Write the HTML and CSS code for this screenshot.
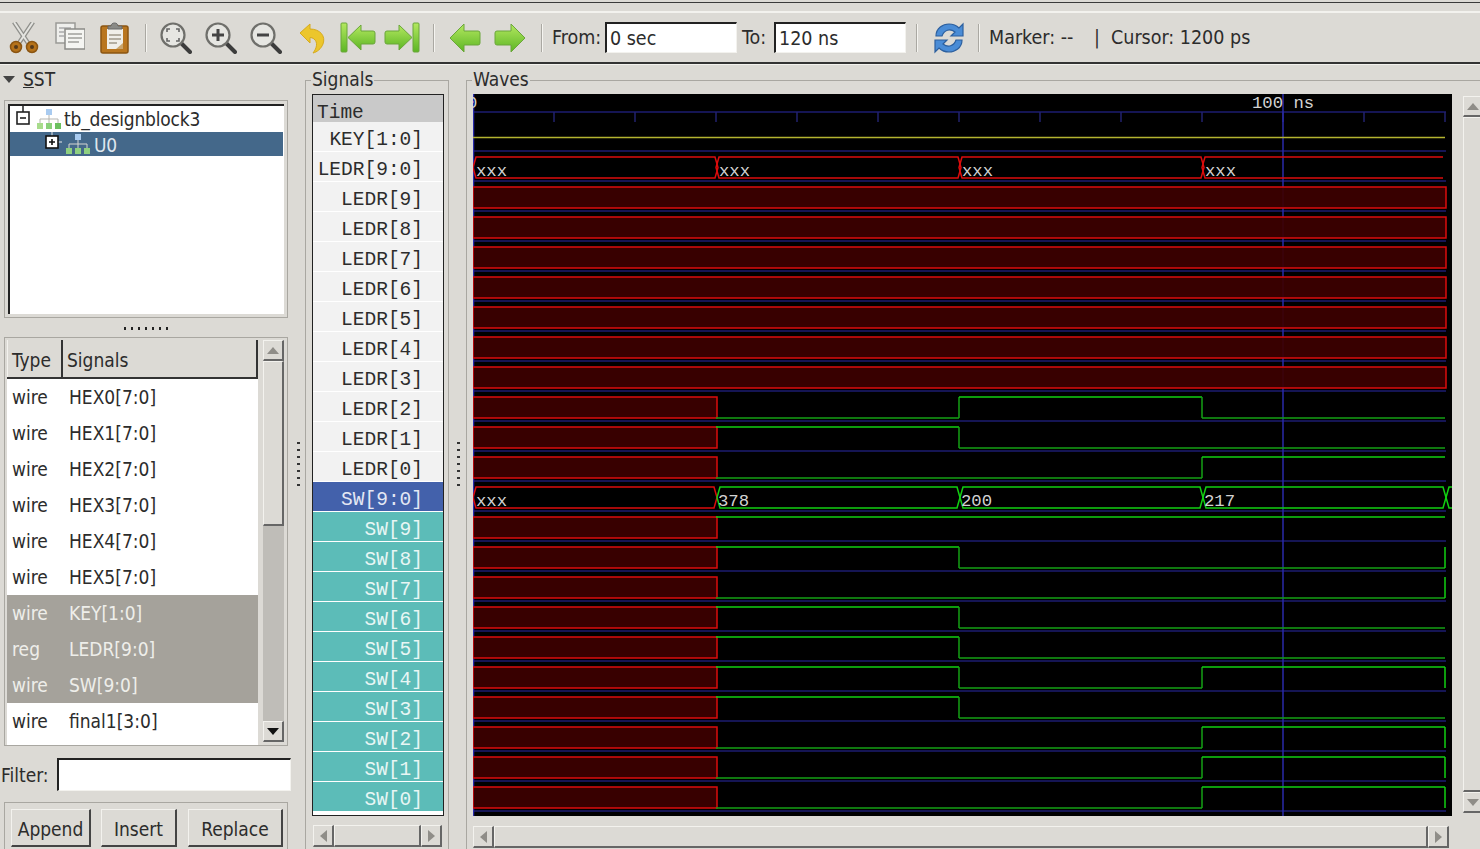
FILE: index.html
```html
<!DOCTYPE html>
<html lang="en">
<head>
    <meta charset="UTF-8">
    <title>GTKWave</title>
    <link rel="stylesheet" href="styles.css">
</head>
<body>

<div class="menu-gap"></div>

<div class="toolbar">
    <div class="tools first-tools">
        <svg class="icon" viewBox="0 0 32 32">
            <path d="M6 0 L20 21" stroke="#8f8f8b" stroke-width="4.5"/>
            <path d="M25 0 L11 21" stroke="#8f8f8b" stroke-width="4.5"/>
            <path d="M6 0 L20 21 M25 0 L11 21" stroke="#e4e4e0" stroke-width="2"/>
            <circle cx="8" cy="25" r="5.5" fill="#b5721a" stroke="#8b5512" stroke-width="1.5"/>
            <circle cx="24" cy="25" r="5.5" fill="#b5721a" stroke="#8b5512" stroke-width="1.5"/>
            <circle cx="8" cy="25" r="2" fill="#54391a"/>
            <circle cx="24" cy="25" r="2" fill="#54391a"/>
        </svg>
        <svg class="icon" viewBox="0 0 32 32">
            <rect x="3" y="1" width="19" height="20" fill="#efefec" stroke="#9a9a96" stroke-width="1.5"/>
            <path d="M6 6 H18 M6 10 H11 M6 14 H11" stroke="#aaa" stroke-width="1.5"/>
            <rect x="12" y="7" width="20" height="20" fill="#f5f5f2" stroke="#8b8b87" stroke-width="1.5"/>
            <path d="M15 12 H29 M15 16 H29 M15 20 H26" stroke="#a0a09c" stroke-width="1.5"/>
        </svg>
        <svg class="icon" viewBox="0 0 32 32">
            <rect x="3" y="4" width="27" height="27" rx="2" fill="#b9761f" stroke="#8b5512" stroke-width="1.5"/>
            <rect x="9" y="7" width="16" height="20" fill="#f0efe9"/>
            <path d="M11 13 H23 M11 17 H23 M11 21 H19" stroke="#a09a8a" stroke-width="1.5"/>
            <path d="M18 27 L25 21 V27 Z" fill="#c9a56d"/>
            <path d="M10 7 V4 H13 C13 0 20 0 20 4 H24 V7 Z" fill="#8a8a86" stroke="#666" stroke-width="1"/>
        </svg>
    </div>
    <span class="sep sep-a"></span>
    <div class="tools">
        <svg class="icon" viewBox="0 0 32 32">
            <path d="M21 21 L30 30" stroke="#3c3c3c" stroke-width="4" stroke-linecap="round"/>
            <circle cx="13" cy="13" r="11.5" fill="#e6e6e2" stroke="#6f6f6b" stroke-width="2.2"/>
            <path d="M7 10 V7 H10 M16 7 H19 V10 M19 16 V19 H16 M10 19 H7 V16" fill="none" stroke="#666" stroke-width="1.6"/>
        </svg>
        <svg class="icon" viewBox="0 0 32 32">
            <path d="M21 21 L30 30" stroke="#3c3c3c" stroke-width="4" stroke-linecap="round"/>
            <circle cx="13" cy="13" r="11.5" fill="#e6e6e2" stroke="#6f6f6b" stroke-width="2.2"/>
            <path d="M7 13 H19 M13 7 V19" stroke="#444" stroke-width="3"/>
        </svg>
        <svg class="icon" viewBox="0 0 32 32">
            <path d="M21 21 L30 30" stroke="#3c3c3c" stroke-width="4" stroke-linecap="round"/>
            <circle cx="13" cy="13" r="11.5" fill="#e6e6e2" stroke="#6f6f6b" stroke-width="2.2"/>
            <path d="M7 13 H19" stroke="#444" stroke-width="3"/>
        </svg>
        <svg class="icon" viewBox="0 0 32 32">
            <path d="M5 11 L15 2 V7 C25 7 31 14 28 22 C26 27 22 30 18 31 C22 26 23 20 19 17 C18 16 16 15.5 15 15.5 V21 Z" fill="#ecc62c" stroke="#d6aa1e"/>
        </svg>
    </div>
    <div class="tools tools-tight">
        <svg class="icon wide" viewBox="0 0 36 32">
            <defs>
                <linearGradient id="leaf" x1="0" y1="0" x2="0" y2="1">
                    <stop offset="0" stop-color="#b4e860"/>
                    <stop offset="1" stop-color="#5cb524"/>
                </linearGradient>
            </defs>
            <rect x="1" y="1" width="6" height="29" rx="1" fill="url(#leaf)" stroke="#6aa63a"/>
            <path d="M8 15.5 L21 3 V9 H33 Q35 9 35 11 V20 Q35 22 33 22 H21 V28 Z" fill="url(#leaf)" stroke="#6aa63a"/>
        </svg>
        <svg class="icon wide" viewBox="0 0 36 32">
            <rect x="29" y="1" width="6" height="29" rx="1" fill="url(#leaf)" stroke="#6aa63a"/>
            <path d="M28 15.5 L15 3 V9 H3 Q1 9 1 11 V20 Q1 22 3 22 H15 V28 Z" fill="url(#leaf)" stroke="#6aa63a"/>
        </svg>
    </div>
    <span class="sep sep-b"></span>
    <div class="tools">
        <svg class="icon" viewBox="0 0 32 32">
            <path d="M1 16 L15 2 V9 H29 Q31 9 31 11 V21 Q31 23 29 23 H15 V30 Z" fill="url(#leaf)" stroke="#6aa63a"/>
        </svg>
        <svg class="icon" viewBox="0 0 32 32">
            <path d="M31 16 L17 2 V9 H3 Q1 9 1 11 V21 Q1 23 3 23 H17 V30 Z" fill="url(#leaf)" stroke="#6aa63a"/>
        </svg>
    </div>
    <span class="sep sep-c"></span>
    <span class="tool-label from-label">From:</span>
    <input class="time-box" type="text" value="0 sec">
    <span class="tool-label to-label">To:</span>
    <input class="time-box" type="text" value="120 ns">
    <span class="sep sep-d"></span>
    <svg class="icon" viewBox="0 0 32 32">
        <path d="M3 14 C3 6 10 2 16 2 C21 2 24 4 26 6 L30 2 V14 H18 L22 10 C17 6 11 8 9 14 Z" fill="#4a8cd6" stroke="#2c5f9e" stroke-width="1.2"/>
        <path d="M29 18 C29 26 22 30 16 30 C11 30 8 28 6 26 L2 30 V18 H14 L10 22 C15 26 21 24 23 18 Z" fill="#4a8cd6" stroke="#2c5f9e" stroke-width="1.2"/>
    </svg>
    <span class="sep sep-e"></span>
    <span class="tool-label status">Marker: --</span>
    <span class="tool-label bar">|</span>
    <span class="tool-label">Cursor: 1200 ps</span>
</div>

<div class="main">

    <div class="left-col">
        <div class="sst-head">
            <span class="sst-arrow"></span>
            <span class="sst-title"><u>S</u>ST</span>
        </div>
        <div class="tree-frame">
            <div class="tree">
                <div class="tree-row">
                    <svg class="expander" viewBox="0 0 14 20">
                        <path d="M7 0 V6" stroke="#222" stroke-width="1.5"/>
                        <rect x="1" y="6" width="12" height="12" fill="#fff" stroke="#222" stroke-width="1.6"/>
                        <path d="M4 12 H10" stroke="#222" stroke-width="1.6"/>
                    </svg>
                    <svg class="hier-icon" viewBox="0 0 24 20">
                        <rect x="9" y="0" width="6" height="6" fill="#a9cbf0"/>
                        <path d="M12 6 V14 M3 10 H21 M3 10 V14 M21 10 V14" stroke="#b5b5b0"/>
                        <rect x="0" y="14" width="6" height="6" fill="#a8dc8c"/>
                        <rect x="9" y="14" width="6" height="6" fill="#8ad07a"/>
                        <rect x="18" y="14" width="6" height="6" fill="#6cc060"/>
                    </svg>
                    <span class="tree-text">tb_designblock3</span>
                </div>
                <div class="tree-row tree-selected">
                    <svg class="expander" viewBox="0 0 18 20">
                        <path d="M7 0 V4 M13 10 H17" stroke="#e8e8e8"/>
                        <rect x="1" y="4" width="12" height="12" fill="#fff" stroke="#111" stroke-width="1.6"/>
                        <path d="M4 10 H10 M7 7 V13" stroke="#111" stroke-width="1.6"/>
                    </svg>
                    <svg class="hier-icon" viewBox="0 0 24 20">
                        <rect x="9" y="0" width="6" height="6" fill="#a9cbf0"/>
                        <path d="M12 6 V14 M3 10 H21 M3 10 V14 M21 10 V14" stroke="#d5d5d0"/>
                        <rect x="0" y="14" width="6" height="6" fill="#8fd080"/>
                        <rect x="9" y="14" width="6" height="6" fill="#8fd080"/>
                        <rect x="18" y="14" width="6" height="6" fill="#8fd080"/>
                    </svg>
                    <span class="tree-text">U0</span>
                </div>
            </div>
        </div>
        <div class="pane-handle"></div>
        <div class="list-frame">
            <div class="list">
                <div class="list-head">
                    <div class="head-type">Type</div>
                    <div class="head-sig">Signals</div>
                </div>
                <div class="list-row"><span class="col-type">wire</span><span>HEX0[7:0]</span></div>
                <div class="list-row"><span class="col-type">wire</span><span>HEX1[7:0]</span></div>
                <div class="list-row"><span class="col-type">wire</span><span>HEX2[7:0]</span></div>
                <div class="list-row"><span class="col-type">wire</span><span>HEX3[7:0]</span></div>
                <div class="list-row"><span class="col-type">wire</span><span>HEX4[7:0]</span></div>
                <div class="list-row"><span class="col-type">wire</span><span>HEX5[7:0]</span></div>
                <div class="list-row picked"><span class="col-type">wire</span><span>KEY[1:0]</span></div>
                <div class="list-row picked"><span class="col-type">reg</span><span>LEDR[9:0]</span></div>
                <div class="list-row picked"><span class="col-type">wire</span><span>SW[9:0]</span></div>
                <div class="list-row"><span class="col-type">wire</span><span>final1[3:0]</span></div>
            </div>
            <div class="vscroll list-scroll">
                <div class="scroll-btn"><span class="arrow arrow-up"></span></div>
                <div class="thumb list-thumb"></div>
                <div class="trough"></div>
                <div class="scroll-btn"><span class="arrow arrow-down active"></span></div>
            </div>
        </div>
        <div class="filter-row">
            <label class="filter-label">Filter:</label>
            <input class="filter-box" type="text">
        </div>
        <div class="btn-frame">
            <button class="btn btn-append">Append</button>
            <button class="btn btn-insert">Insert</button>
            <button class="btn btn-replace">Replace</button>
        </div>
    </div>

    <div class="sash sash-left"><span class="sash-dots"></span></div>

    <div class="frame signals-frame">
        <span class="frame-label">Signals</span>
        <div class="sig-list">
            <div class="sig-row sig-time">Time</div>
            <div class="sig-row">KEY[1:0]</div>
            <div class="sig-row">LEDR[9:0]</div>
            <div class="sig-row">LEDR[9]</div>
            <div class="sig-row">LEDR[8]</div>
            <div class="sig-row">LEDR[7]</div>
            <div class="sig-row">LEDR[6]</div>
            <div class="sig-row">LEDR[5]</div>
            <div class="sig-row">LEDR[4]</div>
            <div class="sig-row">LEDR[3]</div>
            <div class="sig-row">LEDR[2]</div>
            <div class="sig-row">LEDR[1]</div>
            <div class="sig-row">LEDR[0]</div>
            <div class="sig-row sig-bus">SW[9:0]</div>
            <div class="sig-row sig-bit">SW[9]</div>
            <div class="sig-row sig-bit">SW[8]</div>
            <div class="sig-row sig-bit">SW[7]</div>
            <div class="sig-row sig-bit">SW[6]</div>
            <div class="sig-row sig-bit">SW[5]</div>
            <div class="sig-row sig-bit">SW[4]</div>
            <div class="sig-row sig-bit">SW[3]</div>
            <div class="sig-row sig-bit">SW[2]</div>
            <div class="sig-row sig-bit">SW[1]</div>
            <div class="sig-row sig-bit">SW[0]</div>
        </div>
        <div class="hscroll sig-hscroll">
            <div class="scroll-btn"><span class="arrow arrow-left"></span></div>
            <div class="thumb"></div>
            <div class="scroll-btn"><span class="arrow arrow-right"></span></div>
        </div>
    </div>

    <div class="sash sash-right"><span class="sash-dots"></span></div>

    <div class="frame waves-frame">
        <span class="frame-label">Waves</span>
        <div class="waves-body">
            <svg id="waves" class="waves" viewBox="473 94 979 722"></svg>
            <div class="vscroll wave-scroll">
                <div class="scroll-btn"><span class="arrow arrow-up"></span></div>
                <div class="thumb"></div>
                <div class="scroll-btn"><span class="arrow arrow-down"></span></div>
            </div>
        </div>
        <div class="hscroll wave-hscroll">
            <div class="scroll-btn"><span class="arrow arrow-left"></span></div>
            <div class="thumb"></div>
            <div class="scroll-btn"><span class="arrow arrow-right"></span></div>
        </div>
    </div>

</div>

<script src="waves.js"></script>
</body>
</html>
```

FILE: styles.css
```css
body {
    margin: 0;
    width: 1480px;
    height: 849px;
    overflow: hidden;
    background-color: #dcdad5;
    color: #2c2c2c;
    font-family: "DejaVu Sans", sans-serif;
    font-stretch: condensed;
    font-size: 19px;
}

.menu-gap {
    height: 9px;
    margin-top: 2px;
    border-top: 1px solid #3a3a3a;
    box-sizing: border-box;
    background-color: #dcdad5;
}

/* toolbar */
.toolbar {
    display: flex;
    align-items: center;
    height: 49px;
    padding-left: 8px;
    border-top: 2px solid #f3f2ee;
    border-bottom: 2px solid #333;
    box-shadow: 0 1px 0 #f3f2ee;
    font-size: 19.5px;
}
.tools {
    display: flex;
    gap: 13px;
}
.tools-tight {
    gap: 8px;
    margin-left: 13px;
}
.icon {
    width: 32px;
    height: 32px;
    flex: none;
}
.wide {
    width: 36px;
}
.sep {
    width: 1px;
    height: 28px;
    background-color: #aaa8a2;
    border-right: 1px solid #f5f4f0;
    flex: none;
}
.sep-a { margin: 0 13px 0 15px; }
.sep-b { margin: 0 14px 0 13px; }
.sep-c { margin: 0 9px 0 15px; }
.sep-d { margin: 0 15px 0 10px; }
.sep-e { margin: 0 9px 0 13px; }
.tool-label {
    white-space: nowrap;
    flex: none;
}
.from-label {
    width: 52px;
}
.to-label {
    width: 31px;
    margin-left: 5px;
}
.status {
    width: 105px;
}
.bar {
    width: 17px;
}
.time-box {
    width: 132px;
    height: 31px;
    box-sizing: border-box;
    margin-left: 1px;
    padding: 0 0 0 3px;
    border: 1px solid #f3f2ee;
    border-top: 2px solid #222;
    border-left: 2px solid #222;
    background-color: white;
    color: #2c2c2c;
    font: inherit;
    font-stretch: condensed;
}

.main {
    display: flex;
    height: 785px;
}

/* left column */
.left-col {
    width: 293px;
    flex: none;
}
.sst-head {
    display: flex;
    align-items: center;
    height: 30px;
}
.sst-arrow {
    width: 0;
    height: 0;
    margin: 0 9px 0 3px;
    border-left: 6px solid transparent;
    border-right: 6px solid transparent;
    border-top: 7px solid #444;
}
.sst-title {
    margin-left: -1px;
}
.tree-frame {
    width: 284px;
    height: 218px;
    margin: 6px 0 0 4px;
    padding: 3px;
    box-sizing: border-box;
    border: 1px solid #a9a7a1;
}
.tree {
    height: 100%;
    box-sizing: border-box;
    border-top: 2px solid #222;
    border-left: 2px solid #222;
    background-color: white;
    padding-right: 1px;
}
.tree-row {
    display: flex;
    align-items: center;
    height: 26px;
    padding-left: 6px;
    white-space: nowrap;
}
.tree-text {
    margin-left: -1px;
    letter-spacing: -0.2px;
}
.tree-selected {
    height: 24px;
    padding-left: 35px;
    background-color: #44688a;
    color: #dfe6ee;
}
.tree-selected .tree-text {
    padding-top: 2px;
}
.expander {
    width: 14px;
    height: 20px;
    flex: none;
    align-self: flex-start;
}
.tree-selected .expander {
    width: 18px;
}
.hier-icon {
    width: 24px;
    height: 20px;
    flex: none;
    margin: 0 4px 0 7px;
}
.tree-selected .hier-icon {
    margin: 0 5px 0 3px;
}
.pane-handle {
    width: 48px;
    height: 3px;
    margin: 9px 0 7px 124px;
    background: repeating-linear-gradient(90deg, #222 0 2px, transparent 2px 7px);
}
.list-frame {
    display: flex;
    width: 284px;
    height: 409px;
    margin-left: 4px;
    box-sizing: border-box;
    border: 1px solid #a9a7a1;
    padding: 2px 0 0 2px;
}
.list {
    width: 251px;
    background-color: white;
}
.list-head {
    display: flex;
    height: 39px;
    box-sizing: border-box;
    background-color: #dcdad5;
    border-bottom: 2px solid #333;
    align-items: stretch;
    line-height: 40px;
}
.head-type {
    width: 56px;
    box-sizing: border-box;
    padding-left: 4px;
    border-right: 2px solid #333;
    border-left: 1px solid #f3f2ee;
}
.head-sig {
    flex: 1;
    padding-left: 4px;
    border-right: 2px solid #333;
}
.list-row {
    display: flex;
    height: 36px;
    line-height: 36px;
    padding-left: 5px;
}
.col-type {
    width: 57px;
}
.picked {
    background-color: #a5a29b;
    color: #eeeeea;
}
.filter-row {
    display: flex;
    align-items: center;
    height: 33px;
    margin-top: 12px;
    padding-left: 1px;
}
.filter-label {
    width: 56px;
}
.filter-box {
    width: 234px;
    height: 33px;
    box-sizing: border-box;
    border: 1px solid #f3f2ee;
    border-top: 2px solid #222;
    border-left: 2px solid #222;
    background-color: white;
}
.btn-frame {
    display: flex;
    width: 284px;
    height: 60px;
    box-sizing: border-box;
    margin: 11px 0 0 4px;
    padding: 6px 0 0 6px;
    border: 1px solid #a9a7a1;
}
.btn {
    height: 38px;
    padding: 2px 0 0 0;
    box-sizing: border-box;
    border: 1px solid #f3f2ee;
    border-right: 2px solid #444;
    border-bottom: 2px solid #444;
    background-color: #dcdad5;
    color: #2c2c2c;
    font: inherit;
    font-stretch: condensed;
}
.btn-append { width: 80px; }
.btn-insert { width: 76px; margin-left: 10px; }
.btn-replace { width: 95px; margin-left: 11px; }

/* scrollbars */
.vscroll, .hscroll {
    display: flex;
    background-color: #dcdad5;
}
.vscroll {
    flex-direction: column;
}
.scroll-btn {
    display: flex;
    align-items: center;
    justify-content: center;
    flex: none;
    width: 21px;
    height: 21px;
    box-sizing: border-box;
    border: 1px solid #f3f2ee;
    border-right: 2px solid #666;
    border-bottom: 2px solid #666;
    background-color: #dcdad5;
}
.thumb {
    flex: 1;
    box-sizing: border-box;
    border: 1px solid #f3f2ee;
    border-right: 2px solid #666;
    border-bottom: 2px solid #666;
}
.trough {
    height: 195px;
    background-color: #bfbdb8;
}
.arrow {
    width: 0;
    height: 0;
}
.arrow-up {
    border-left: 6px solid transparent;
    border-right: 6px solid transparent;
    border-bottom: 7px solid #8f8d88;
}
.arrow-down {
    border-left: 6px solid transparent;
    border-right: 6px solid transparent;
    border-top: 7px solid #8f8d88;
}
.arrow-left {
    border-top: 6px solid transparent;
    border-bottom: 6px solid transparent;
    border-right: 7px solid #8f8d88;
}
.arrow-right {
    border-top: 6px solid transparent;
    border-bottom: 6px solid transparent;
    border-left: 7px solid #8f8d88;
}
.active {
    border-top-color: #111;
}
.list-scroll {
    width: 21px;
    height: 402px;
    margin-left: 5px;
}
.list-thumb {
    flex: none;
    height: 165px;
}

/* sashes between panes */
.sash {
    display: flex;
    align-items: center;
    padding-top: 18px;
    box-sizing: border-box;
    flex: none;
}
.sash-left {
    width: 12px;
    padding-left: 4px;
}
.sash-right {
    width: 17px;
    padding-left: 8px;
}
.sash-dots {
    width: 3px;
    height: 48px;
    background: repeating-linear-gradient(180deg, #333 0 2px, transparent 2px 7px);
}

/* signals and waves frames */
.frame {
    position: relative;
    flex: none;
    box-sizing: border-box;
    margin-top: 16px;
    height: 800px;
    border: 1px solid #a9a7a1;
    padding: 13px 0 0 6px;
}
.frame-label {
    position: absolute;
    top: -13px;
    left: 5px;
    padding: 0 1px;
    background-color: #dcdad5;
    line-height: 22px;
}
.signals-frame {
    width: 144px;
}
.waves-frame {
    width: 1020px;
    border-right: 0;
}
.sig-list {
    width: 132px;
    height: 722px;
    box-sizing: border-box;
    border: 1.5px solid #222;
    background-color: white;
    font-family: "Liberation Mono", monospace;
    font-stretch: normal;
    font-size: 19.5px;
}
.sig-row {
    height: 30px;
    box-sizing: border-box;
    padding: 4px 20px 0 0;
    text-align: right;
    line-height: 29px;
    background-color: #f2f2f2;
    border-bottom: 1.5px solid white;
    white-space: nowrap;
}
.sig-time {
    height: 27px;
    padding: 5px 0 0 4px;
    text-align: left;
    line-height: 26px;
    background-color: #c9c9c9;
    border-bottom: 0;
}
.sig-bus {
    background-color: #4361ab;
    color: #e4e8f4;
}
.sig-bit {
    background-color: #5cbcb8;
    color: #e8f6f4;
}
.sig-hscroll {
    width: 129px;
    height: 22px;
    margin: 9px 0 0 1px;
}
.waves-body {
    display: flex;
}
.waves {
    display: block;
    width: 979px;
    height: 722px;
    flex: none;
    background-color: black;
}
.wave-scroll {
    width: 21px;
    height: 717px;
    margin: 2px 0 0 11px;
}
.wave-hscroll {
    width: 976px;
    height: 22px;
    margin-top: 10px;
}
.hscroll .thumb {
    height: 22px;
}
.hscroll .scroll-btn {
    height: 22px;
}
.wave-text {
    font-family: "Liberation Mono", monospace;
    font-size: 17.3px;
    fill: #d2d2d2;
}
```

FILE: waves.js
```js
// draws the wave canvas. coordinates in the svg are the same as on the page
const svg = document.getElementById('waves');
const EDGE = [473, 716, 959, 1202, 1445];
const RED = '#dc0c0c';
const HIGH = '#12d012';
const LOW = '#14a014';
const GRID = '#1c1c70';

let out = '';

function line(x1, y1, x2, y2, color, w) {
    out += `<path d="M${x1} ${y1} L${x2} ${y2}" stroke="${color}" stroke-width="${w || 1.5}" fill="none"/>`;
}

function label(x, y, str) {
    out += `<text class="wave-text" x="${x}" y="${y}">${str}</text>`;
}

function rowTop(row) { return 127 + row * 30; }
function rowBot(row) { return 148 + row * 30; }

// red box for an unknown value
function unknown(row, x1, x2) {
    out += `<rect x="${x1}" y="${rowTop(row)}" width="${x2 - x1}" height="21" fill="#3c0000" fill-opacity="0.93" stroke="${RED}" stroke-width="1.5"/>`;
}

// one bit: values are for the three segments after the first edge, last is the level past the end
function bit(row, values) {
    const hi = rowTop(row), lo = rowBot(row);
    for (let i = 0; i < 3; i++) {
        const y = values[i] ? hi : lo;
        line(EDGE[i + 1], y, EDGE[i + 2], y, values[i] ? HIGH : LOW);
        const next = values[i + 1];
        if (next !== values[i]) {
            line(EDGE[i + 2], hi, EDGE[i + 2], lo, i == 2 ? HIGH : LOW);
        }
    }
}

function bus(row, x1, x2, color) {
    const hi = rowTop(row), lo = rowBot(row), mid = (hi + lo) / 2;
    out += `<path d="M${x1} ${mid} L${x1 + 3} ${hi} H${x2 - 3} L${x2} ${mid} L${x2 - 3} ${lo} H${x1 + 3} Z" stroke="${color}" stroke-width="1.5" fill="none"/>`;
}

// last piece of a bus, it runs off the end without closing
function openBus(row, x1, x2, color) {
    const hi = rowTop(row), lo = rowBot(row), mid = (hi + lo) / 2;
    out += `<path d="M${x2} ${hi} H${x1 + 3} L${x1} ${mid} L${x1 + 3} ${lo} H${x2}" stroke="${color}" stroke-width="1.5" fill="none"/>`;
}

// ruler and grid
line(473, 112, 1446, 112, GRID);
for (let x = 554; x < 1450; x += 81) {
    line(x, 112, x, 122, '#22226e');
}
for (let r = 0; r < 23; r++) {
    line(473, 151 + r * 30, 1446, 151 + r * 30, GRID);
}
line(473.5, 94, 473.5, 816, '#2a2aa8');
line(1283, 94, 1283, 816, '#2a2aa8');
label(467, 108, '0');
label(1252, 108, '100 ns');

// KEY[1:0]
line(473, 137.5, 1445, 137.5, '#b4b430');

// LEDR[9:0]
for (let i = 0; i < 3; i++) {
    bus(1, EDGE[i], EDGE[i + 1] + 2, RED);
}
openBus(1, 1202, 1443, RED);
for (let i = 0; i < 4; i++) {
    label(EDGE[i] + 3, 176, 'xxx');
}

// LEDR[9] .. LEDR[3] stay unknown
for (let r = 2; r <= 8; r++) {
    unknown(r, 473, 1446);
}

// rows that are only unknown up to the first edge
for (let r = 9; r <= 22; r++) {
    if (r != 12) unknown(r, 473, 717);
}

bit(9, [0, 1, 0, 0]);
bit(10, [1, 0, 0, 0]);
bit(11, [0, 0, 1, 1]);

// SW[9:0]
bus(12, 473, 717, RED);
bus(12, 717, 960, HIGH);
bus(12, 960, 1203, HIGH);
bus(12, 1203, 1446, HIGH);
openBus(12, 1446, 1452, HIGH);
label(476, 506, 'xxx');
label(718, 506, '378');
label(961, 506, '200');
label(1204, 506, '217');

bit(13, [1, 1, 1, 1]);
bit(14, [1, 0, 0, 1]);
bit(15, [0, 0, 0, 1]);
bit(16, [1, 0, 0, 0]);
bit(17, [1, 0, 0, 0]);
bit(18, [1, 0, 1, 0]);
bit(19, [1, 0, 0, 0]);
bit(20, [0, 0, 1, 0]);
bit(21, [0, 0, 1, 0]);
bit(22, [0, 0, 1, 0]);

svg.innerHTML = out;
```
